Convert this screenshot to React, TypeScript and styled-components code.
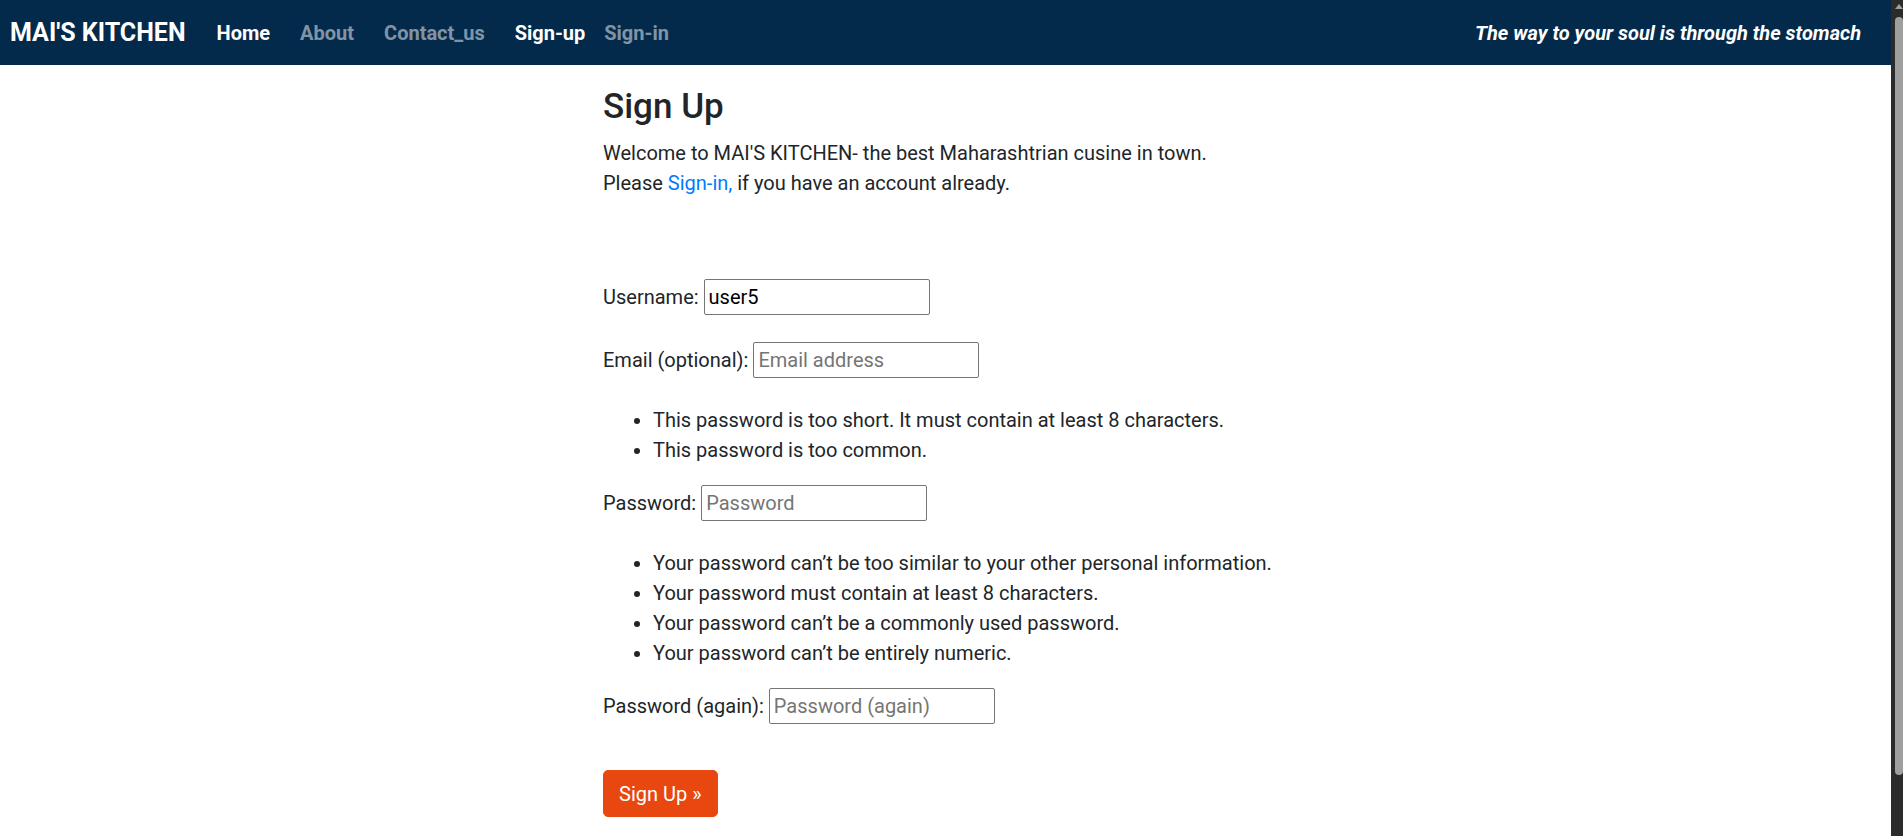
import styled, { createGlobalStyle } from "styled-components";

const GlobalStyle = createGlobalStyle`
    html, body {
        overflow: hidden;
    }
    body {
        margin: 0;
        font-family: Roboto, "Liberation Sans", Arial, sans-serif;
        font-size: 20px;
        line-height: 1.5;
        color: #212529;
        background: #ffffff;
    }
`

const Frame = styled.div`
    display: flex;
    align-items: flex-start;
`
const Page = styled.div`
    flex: 1;
    min-width: 0;
`
// browser scrollbar from the screenshot
const ScrollTrack = styled.div`
    flex: 0 0 12px;
    height: 100vh;
    background: #2b2b2b;
    display: flex;
    flex-direction: column;
    align-items: flex-end;
`
const ScrollArrow = styled.div`
    width: 0;
    height: 0;
    margin: 4px 0 0;
    align-self: center;
    border-left: 4px solid transparent;
    border-right: 4px solid transparent;
    border-bottom: 5px solid #9f9f9f;
    transform: translateX(2px);
`
const ScrollThumb = styled.div`
    width: 8px;
    height: 758px;
    margin-top: 8px;
    background: #9f9f9f;
    border-radius: 4px;
`

const Navbar = styled.nav`
    height: 65px;
    background-color: #032a4b;
    display: flex;
    align-items: center;
    padding: 0 10px;
    box-sizing: border-box;
`
const Brand = styled.a`
    color: #ffffff;
    font-size: 25px;
    font-weight: 700;
    text-decoration: none;
    margin-right: 16px;
    white-space: nowrap;
`
const NavList = styled.ul`
    display: flex;
    list-style: none;
    margin: 0;
    padding: 0;
`
const NavLink = styled.a<{ $active?: boolean; $tight?: boolean }>`
    display: block;
    color: ${p => p.$active ? "#ffffff" : "rgba(255, 255, 255, 0.5)"};
    font-size: 20px;
    font-weight: 700;
    text-decoration: none;
    padding: 0 15px;
    padding-left: ${p => p.$tight ? "4px" : "15px"};
`
const Tagline = styled.span`
    margin-left: auto;
    margin-right: 20px;
    color: #ffffff;
    font-size: 20px;
    font-weight: 700;
    font-style: italic;
    white-space: nowrap;
`

const Main = styled.main`
    width: 700px;
    margin-left: 603px;
    padding: 21px 0 60px;
`
const Title = styled.h1`
    font-size: 35px;
    font-weight: 500;
    line-height: 1.2;
    margin: 0 0 10px;
`
const Intro = styled.p`
    margin: 0;
`
const Link = styled.a`
    color: #007bff;
    text-decoration: none;
`
const Form = styled.form`
    display: flex;
    flex-direction: column;
    align-items: flex-start;
    margin-top: 81px;
`
const Row = styled.div`
    display: flex;
    align-items: center;
    gap: 5px;
    margin-bottom: 27px;
`
const Input = styled.input`
    width: 226px;
    height: 36px;
    box-sizing: border-box;
    border: 1px solid #767676;
    border-radius: 2px;
    padding: 0 4px;
    font-family: inherit;
    font-size: 20px;
    color: #000000;
    &::placeholder {
        color: #757575;
    }
`
const Help = styled.ul`
    margin: 0 0 20px;
    padding-left: 50px;
`
const Button = styled.button`
    margin-top: 19px;
    background-color: #e8470f;
    border: 1px solid #e8470f;
    border-radius: 5px;
    color: #ffffff;
    font-family: inherit;
    font-size: 20px;
    line-height: 30px;
    padding: 7.5px 15px;
    cursor: pointer;
`

const App = () => {
    return (
        <>
            <GlobalStyle />
            <Frame>
                <Page>
                    <Navbar>
                        <Brand href="#">MAI'S KITCHEN</Brand>
                        <NavList>
                            <li><NavLink $active href="#">Home</NavLink></li>
                            <li><NavLink href="#">About</NavLink></li>
                            <li><NavLink href="#">Contact_us</NavLink></li>
                        </NavList>
                        <NavList>
                            <li><NavLink $active href="#">Sign-up</NavLink></li>
                            <li><NavLink $tight href="#">Sign-in</NavLink></li>
                        </NavList>
                        <Tagline>The way to your soul is through the stomach</Tagline>
                    </Navbar>
                    <Main>
                        <Title>Sign Up</Title>
                        <Intro>
                            Welcome to MAI'S KITCHEN- the best Maharashtrian cusine in town.<br />
                            Please <Link href="#">Sign-in,</Link> if you have an account already.
                        </Intro>
                        <Form onSubmit={e => e.preventDefault()}>
                            <Row>
                                <label htmlFor="id_username">Username:</label>
                                <Input id="id_username" type="text" defaultValue="user5" />
                            </Row>
                            <Row>
                                <label htmlFor="id_email">Email (optional):</label>
                                <Input id="id_email" type="email" placeholder="Email address" />
                            </Row>
                            <Help>
                                <li>This password is too short. It must contain at least 8 characters.</li>
                                <li>This password is too common.</li>
                            </Help>
                            <Row>
                                <label htmlFor="id_password1">Password:</label>
                                <Input id="id_password1" type="password" placeholder="Password" />
                            </Row>
                            <Help>
                                <li>Your password can’t be too similar to your other personal information.</li>
                                <li>Your password must contain at least 8 characters.</li>
                                <li>Your password can’t be a commonly used password.</li>
                                <li>Your password can’t be entirely numeric.</li>
                            </Help>
                            <Row>
                                <label htmlFor="id_password2">Password (again):</label>
                                <Input id="id_password2" type="password" placeholder="Password (again)" />
                            </Row>
                            <Button type="submit">Sign Up »</Button>
                        </Form>
                    </Main>
                </Page>
                <ScrollTrack>
                    <ScrollArrow />
                    <ScrollThumb />
                </ScrollTrack>
            </Frame>
        </>
    )
}
export default App;
